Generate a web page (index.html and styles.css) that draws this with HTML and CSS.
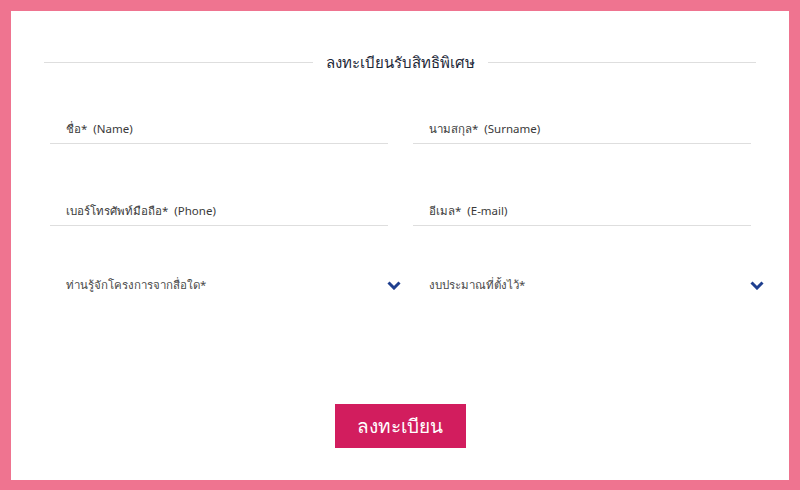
FILE: index.html
```html
<!DOCTYPE html>
<html lang="th">
<head>
    <meta charset="UTF-8">
    <meta name="viewport" content="width=device-width, initial-scale=1.0">
    <title>ลงทะเบียนรับสิทธิพิเศษ</title>
    <link rel="stylesheet" href="styles.css">
</head>
<body>
    <div class="register-frame">
        <form class="register-card">
            <div class="section-title">
                <span class="title-line"></span>
                <h2>ลงทะเบียนรับสิทธิพิเศษ</h2>
                <span class="title-line"></span>
            </div>

            <div class="form-grid">
                <div class="field">
                    <input type="text" placeholder="ชื่อ*  (Name)">
                </div>
                <div class="field">
                    <input type="text" placeholder="นามสกุล*  (Surname)">
                </div>
                <div class="field">
                    <input type="text" placeholder="เบอร์โทรศัพท์มือถือ*  (Phone)">
                </div>
                <div class="field">
                    <input type="text" placeholder="อีเมล*  (E-mail)">
                </div>
                <div class="field select-field">
                    <span class="select-text">ท่านรู้จักโครงการจากสื่อใด*</span>
                    <svg class="chevron" viewBox="0 0 14 9" width="14" height="9">
                        <path d="M1.5 1.5 L7 7 L12.5 1.5" fill="none" stroke="currentColor" stroke-width="3"/>
                    </svg>
                </div>
                <div class="field select-field">
                    <span class="select-text">งบประมาณที่ตั้งไว้*</span>
                    <svg class="chevron" viewBox="0 0 14 9" width="14" height="9">
                        <path d="M1.5 1.5 L7 7 L12.5 1.5" fill="none" stroke="currentColor" stroke-width="3"/>
                    </svg>
                </div>
            </div>

            <div class="actions">
                <button type="button">ลงทะเบียน</button>
            </div>
        </form>
    </div>
</body>
</html>
```

FILE: styles.css
```css
:root {
    --frame-pink: #ef7490;
    --btn-pink: #d21d5e;
    --title-color: #1d2838;
    --text-color: #3a3a3a;
    --line-color: #dedede;
    --chevron-color: #1f3f8f;
}

* {
    box-sizing: border-box;
}

body {
    margin: 0;
    font-family: "Noto Sans", "Liberation Sans", sans-serif;
    background-color: var(--frame-pink);
}

.register-frame {
    height: 490px;
    padding: 11px 11px 10px 11px;
}

.register-card {
    background-color: #ffffff;
    height: 100%;
    padding: 38px 33px 0 33px;
}

.section-title {
    display: flex;
    align-items: center;
    gap: 13px;
}

.title-line {
    flex: 1;
    height: 1px;
    background-color: var(--line-color);
}

.section-title h2 {
    margin: 0;
    font-size: 15px;
    font-weight: 500;
    color: var(--title-color);
    line-height: 26px;
}

.form-grid {
    display: grid;
    grid-template-columns: 338px 338px;
    column-gap: 25px;
    row-gap: 38px;
    padding: 0 5px 0 6px;
    margin-top: 25px;
}

.field input {
    display: block;
    width: 100%;
    height: 44px;
    padding: 14px 16px 0 16px;
    border: none;
    border-bottom: 1px solid var(--line-color);
    font-family: inherit;
    font-size: 11.5px;
    color: var(--text-color);
    background: transparent;
    outline: none;
}

.field input::placeholder {
    color: var(--text-color);
    opacity: 1;
}

.select-field {
    display: flex;
    align-items: center;
    justify-content: space-between;
    height: 44px;
    margin-top: -1px;
    padding: 0 0 0 16px;
    margin-right: -13px;
}

.select-text {
    font-size: 11.5px;
    color: #4a4a4a;
}

.chevron {
    color: var(--chevron-color);
}

.actions {
    display: flex;
    justify-content: center;
    margin-top: 97px;
}

button {
    width: 131px;
    height: 44px;
    border: none;
    background-color: var(--btn-pink);
    color: #ffffff;
    font-family: inherit;
    font-size: 19px;
    cursor: pointer;
}
```
